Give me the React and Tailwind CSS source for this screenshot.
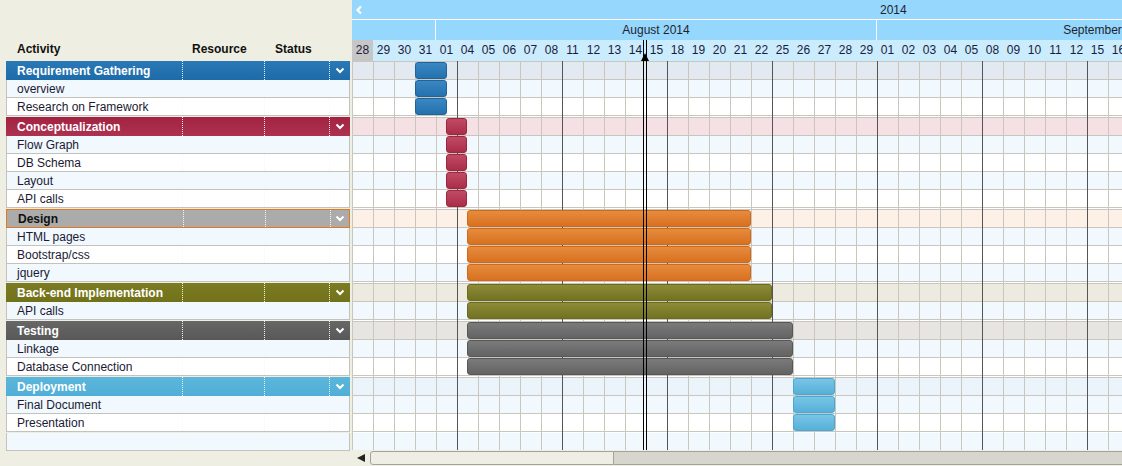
import React from "react";

const DAYS = [
  "28", "29", "30", "31",
  "01", "04", "05", "06", "07", "08", "11", "12", "13", "14", "15", "18", "19", "20", "21", "22", "25", "26", "27", "28", "29",
  "01", "02", "03", "04", "05", "08", "09", "10", "11", "12", "15", "16",
];

const GROUPS = [
  {
    name: "Requirement Gathering",
    head: "bg-linear-to-b from-[#2a78b6] to-[#1d6ba8] text-white",
    cellBg: "bg-[#e2e9f1]",
    bar: "bg-linear-to-b from-[#3987c3] to-[#2371ad] border-[#1f639b]",
    x: 63,
    w: 32,
    tasks: ["overview", "Research on Framework"],
  },
  {
    name: "Conceptualization",
    head: "bg-linear-to-b from-[#a22242] to-[#ad3150] text-white",
    cellBg: "bg-[#f5e1e4]",
    bar: "bg-linear-to-b from-[#c04a64] to-[#ab2c49] border-[#9c2742]",
    x: 94,
    w: 21,
    tasks: ["Flow Graph", "DB Schema", "Layout", "API calls"],
  },
  {
    name: "Design",
    head: "bg-[#ababab] text-[#111] border border-[#e4781e]",
    cellBg: "bg-[#fdf0e6]",
    bar: "bg-linear-to-b from-[#e68b3d] to-[#d8711f] border-[#d06a1a]",
    x: 115,
    w: 284,
    tasks: ["HTML pages", "Bootstrap/css", "jquery"],
  },
  {
    name: "Back-end Implementation",
    head: "bg-linear-to-b from-[#7b7b24] to-[#727219] text-white",
    cellBg: "bg-[#edeadf]",
    bar: "bg-linear-to-b from-[#8b8b38] to-[#727220] border-[#6b6b1d]",
    x: 115,
    w: 305,
    tasks: ["API calls"],
  },
  {
    name: "Testing",
    head: "bg-linear-to-b from-[#676767] to-[#585858] text-white",
    cellBg: "bg-[#e6e5e1]",
    bar: "bg-linear-to-b from-[#7b7b7b] to-[#636363] border-[#575757]",
    x: 115,
    w: 326,
    tasks: ["Linkage", "Database Connection"],
  },
  {
    name: "Deployment",
    head: "bg-linear-to-b from-[#5cb6db] to-[#50aed6] text-white",
    cellBg: "bg-[#ebf4fb]",
    bar: "bg-linear-to-b from-[#78c5e6] to-[#56b0d9] border-[#4aa8d2]",
    x: 441,
    w: 42,
    tasks: ["Final Document", "Presentation"],
  },
];

function Chevron() {
  return (
    <svg width="10" height="7" viewBox="0 0 10 7">
      <polyline points="1.5,1.5 5,5 8.5,1.5" fill="none" stroke="white" strokeWidth="2" />
    </svg>
  );
}

function LeftGroup({ group }) {
  return (
    <div className="mb-[1px]">
      <div className={`ml-[6px] w-[344px] h-[19px] flex items-center font-bold ${group.head}`}>
        <div className="w-[176px] pl-[11px] truncate">{group.name}</div>
        <div className="w-[82px] h-full border-l border-dotted border-white/90" />
        <div className="w-[65px] h-full border-l border-dotted border-white/90" />
        <div className="flex-1 h-full border-l border-dotted border-white/90 flex items-center justify-center">
          <Chevron />
        </div>
      </div>
      {group.tasks.map((t, i) => (
        <div
          key={t}
          className={`ml-[6px] w-[344px] h-[18px] flex items-center border-x border-b border-[#c4c3bb] text-[#1a1a33] ${
            i % 2 === 0 ? "bg-[#f1f8fe]" : "bg-white"
          }`}
        >
          <div className="w-[175px] pl-[10px] truncate">{t}</div>
          <div className="w-[82px] h-full border-l border-dotted border-[#f4f6f8]" />
          <div className="w-[65px] h-full border-l border-dotted border-[#f4f6f8]" />
          <div className="flex-1 h-full border-l border-dotted border-[#f4f6f8]" />
        </div>
      ))}
    </div>
  );
}

function Bar({ group }) {
  return (
    <div
      className={`absolute top-0 h-[17px] z-10 rounded-[3px] border ${group.bar}`}
      style={{ left: group.x, width: group.w }}
    />
  );
}

function GridGroup({ group }) {
  return (
    <div className="mb-[1px]">
      <div className={`relative h-[19px] border-y border-[#c9c6be] ${group.cellBg}`}>
        <Bar group={group} />
      </div>
      {group.tasks.map((t, i) => (
        <div
          key={t}
          className={`relative h-[18px] border-b border-[#c9c6be] ${i % 2 === 0 ? "bg-[#f1f8fe]" : "bg-white"}`}
        >
          <Bar group={group} />
        </div>
      ))}
    </div>
  );
}

export default function App() {
  return (
    <div
      className="w-[1122px] h-[466px] overflow-hidden bg-[#efeee3] flex flex-col text-[12px] leading-[14px] text-[#111]"
      style={{ fontFamily: '"Liberation Sans", Arial, sans-serif' }}
    >
      <div className="flex h-[450px]">
        {/* Left table */}
        <div className="w-[352px] shrink-0">
          <div className="h-[61px] pt-[42px] flex font-bold">
            <div className="w-[192px] pl-[17px]">Activity</div>
            <div className="w-[83px]">Resource</div>
            <div>Status</div>
          </div>
          {GROUPS.map((g) => (
            <LeftGroup key={g.name} group={g} />
          ))}
          <div className="ml-[6px] w-[344px] h-[18px] flex border-x border-b border-[#c4c3bb] bg-[#f1f8fe]">
            <div className="w-[175px]" />
            <div className="w-[82px] h-full border-l border-dotted border-[#f4f6f8]" />
            <div className="w-[65px] h-full border-l border-dotted border-[#f4f6f8]" />
            <div className="flex-1 h-full border-l border-dotted border-[#f4f6f8]" />
          </div>
        </div>

        {/* Timeline */}
        <div className="relative flex-1 overflow-hidden bg-white">
          <div className="h-[19px] bg-[#96d7fd] flex items-center">
            <svg className="ml-[3px] shrink-0" width="8" height="10" viewBox="0 0 8 10">
              <polyline points="6,1.5 2.5,5 6,8.5" fill="none" stroke="white" strokeWidth="2.2" />
            </svg>
            <span className="ml-[517px] text-[#1f1f2f]">2014</span>
          </div>
          <div className="h-[21px] flex border-t border-white bg-[#96d7fd] text-[#1f1f2f]">
            <div className="w-[83px] shrink-0" />
            <div className="w-[441px] shrink-0 border-l border-white flex items-center justify-center">
              August 2014
            </div>
            <div className="w-[462px] shrink-0 border-l border-white flex items-center justify-center">
              September 2014
            </div>
          </div>
          <div className="h-[21px] flex bg-[#caecfc] text-[#1b1b40]">
            {DAYS.map((d, i) => (
              <div
                key={i}
                className={`w-[21px] shrink-0 text-center leading-[21px] ${i === 0 ? "bg-[#c6c6c6]" : ""}`}
              >
                {d}
              </div>
            ))}
          </div>

          <div className="relative">
            {GROUPS.map((g) => (
              <GridGroup key={g.name} group={g} />
            ))}
            <div className="h-[18px] border-b border-[#c9c6be] bg-[#f1f8fe]" />

            {/* column lines */}
            <div className="absolute inset-0 flex z-[5] pointer-events-none">
              {DAYS.map((d, i) => (
                <div
                  key={i}
                  className={`w-[21px] shrink-0 border-l ${
                    i > 0 && i % 5 === 0 ? "border-[#555555]" : "border-[#c9c6be]"
                  }`}
                />
              ))}
            </div>
          </div>

          {/* today marker */}
          <div className="absolute left-[291px] top-[40px] bottom-0 w-[4px] border-x border-black z-20" />
          <div className="absolute left-[289px] top-[53px] w-0 h-0 border-x-[4px] border-x-transparent border-b-[8px] border-b-black z-20" />
        </div>
      </div>

      {/* Horizontal scrollbar */}
      <div className="h-[16px] flex items-center">
        <div className="w-[357px] shrink-0" />
        <div className="w-0 h-0 border-y-[4px] border-y-transparent border-r-[8px] border-r-[#222]" />
        <div className="ml-[5px] w-[244px] h-[14px] shrink-0 rounded-l-[3px] border border-[#a3a39b] bg-[#efeee5]" />
        <div className="flex-1 h-[14px] border-y border-[#a3a39b] bg-[#d7d6ce]" />
      </div>
    </div>
  );
}
